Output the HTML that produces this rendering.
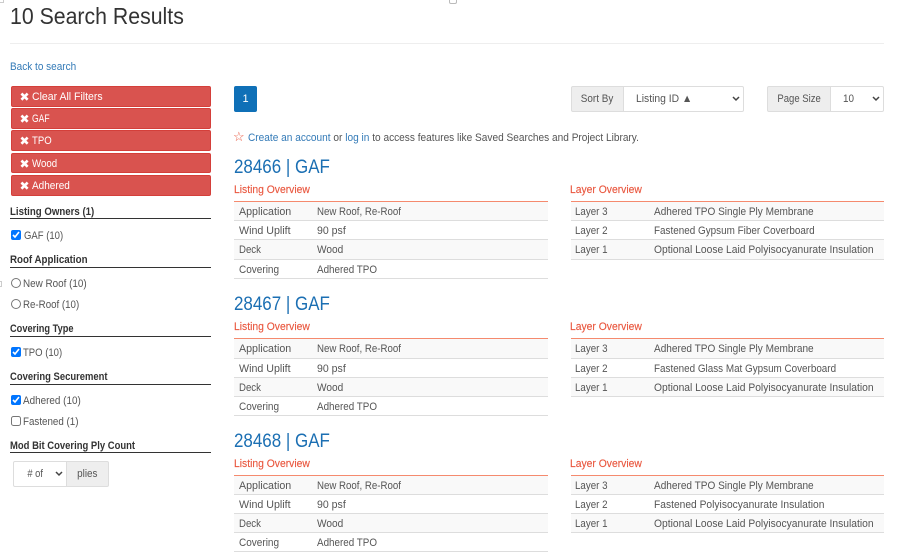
<!DOCTYPE html>
<html><head><meta charset="utf-8"><style>
html,body{margin:0;padding:0;background:#fff}
body{width:901px;height:558px;position:relative;overflow:hidden;font-family:"Liberation Sans",sans-serif;font-size:11px;color:#555}
.t{position:absolute;white-space:nowrap;line-height:14px;transform:scaleX(var(--s,.9));transform-origin:0 50%}
.a{color:#337ab7}
.btn{position:absolute;left:11px;width:200px;height:20.5px;box-sizing:border-box;background:#d9534f;border:.5px solid #d43f3a;border-radius:2px;color:#fff;line-height:20.5px;white-space:nowrap;padding-left:8px}
.btn b{font-size:12px;font-weight:normal;position:absolute;left:7.5px;top:0}
.btn span{position:absolute;left:19.5px;top:0;transform:scaleX(var(--s,.92));transform-origin:0 50%}
.fh{position:absolute;left:10px;width:201px;height:15px;border-bottom:1px solid #333;color:#333;font-weight:bold;line-height:17px;white-space:nowrap}
.fh span,.c{display:inline-block;transform:scaleX(var(--s,.9));transform-origin:0 50%}
.c{transform-origin:50% 50%}
input{position:absolute;margin:0;width:10px;height:10px;accent-color:#0075ff}
.h{position:absolute;left:234px;font-size:19.5px;line-height:22px;color:#1b6fb3;white-space:nowrap;transform:scaleX(.87);transform-origin:0 50%}
.ov{position:absolute;line-height:14px;color:#e9573f;white-space:nowrap;transform:scaleX(.94);transform-origin:0 50%;-webkit-text-stroke:.15px #e9573f}
.tb{position:absolute;border-top:1px solid #f58a6e}
.r{height:18.2px;border-bottom:1px solid #ddd;line-height:18px;position:relative;white-space:nowrap}
.r.o{background:#f9f9f9}
.r span{position:absolute;top:1px;transform:scaleX(var(--s,.9));transform-origin:0 50%}
.g{position:absolute;background:#eee;border:1px solid #ddd;box-sizing:border-box;color:#555;text-align:center;line-height:25px}
.s{position:absolute;background:#fff;border:1px solid #ddd;box-sizing:border-box;color:#555;line-height:25px}
.s svg{position:absolute;right:3px}
</style></head><body>
<div style="position:absolute;left:0;top:0;width:3px;height:2px;border:1px solid #ccc;border-top:0;border-left:0"></div>
<div style="position:absolute;left:0;top:281px;width:1px;height:4px;border:1px solid #ccc;border-left:0"></div>
<div style="position:absolute;left:449px;top:0;width:6px;height:3px;border:1px solid #bbb;border-top:0;border-radius:0 0 2px 2px"></div>
<div class="t" style="left:10px;top:2px;font-size:23px;line-height:28px;color:#333;--s:.925">10 Search Results</div>
<div style="position:absolute;left:10px;top:43px;width:874px;height:1px;background:#eee"></div>
<div class="t a" style="left:10px;top:60px;--s:.91">Back to search</div>

<div class="btn" style="top:86px"><b>✖</b><span style="--s:.955">Clear All Filters</span></div>
<div class="btn" style="top:108px"><b>✖</b><span style="--s:.78">GAF</span></div>
<div class="btn" style="top:130px"><b>✖</b><span style="--s:.87">TPO</span></div>
<div class="btn" style="top:152.5px"><b>✖</b><span style="--s:.88">Wood</span></div>
<div class="btn" style="top:175px"><b>✖</b><span style="--s:.91">Adhered</span></div>

<div class="fh" style="top:203px;line-height:19px"><span style="--s:.878">Listing Owners (1)</span></div>
<input type="checkbox" checked style="left:11px;top:230px"><div class="t" style="left:24px;top:229px;--s:.865">GAF (10)</div>
<div class="fh" style="top:252px"><span style="--s:.885">Roof Application</span></div>
<input type="radio" style="left:10.5px;top:278px"><div class="t" style="left:23px;top:277px;--s:.898">New Roof (10)</div>
<input type="radio" style="left:10.5px;top:299px"><div class="t" style="left:23px;top:298px;--s:.884">Re-Roof (10)</div>
<div class="fh" style="top:321px"><span style="--s:.84">Covering Type</span></div>
<input type="checkbox" checked style="left:11px;top:347px"><div class="t" style="left:23px;top:346px;--s:.865">TPO (10)</div>
<div class="fh" style="top:369px"><span style="--s:.858">Covering Securement</span></div>
<input type="checkbox" checked style="left:11px;top:395px"><div class="t" style="left:23px;top:394px;--s:.9">Adhered (10)</div>
<input type="checkbox" style="left:11px;top:416px"><div class="t" style="left:23px;top:415px;--s:.89">Fastened (1)</div>
<div class="fh" style="top:437px;line-height:19px"><span style="--s:.86">Mod Bit Covering Ply Count</span></div>
<div class="s" style="left:13px;top:461px;width:54px;height:26px;border-radius:2px 0 0 2px;padding-left:12px;line-height:24px"><span class="c" style="--s:.85">#&nbsp;of</span><svg style="top:9px" width="8" height="6"><path d="M1 1l3 3 3-3" fill="none" stroke="#444" stroke-width="1.5"/></svg></div>
<div class="g" style="left:66px;top:461px;width:43px;height:26px;border-radius:0 2px 2px 0;line-height:24px"><span class="c" style="--s:.9">plies</span></div>

<div style="position:absolute;left:234px;top:86px;width:23px;height:26px;background:#0f70b7;border-radius:2px;color:#fff;text-align:center;line-height:26px">1</div>

<div class="g" style="left:571px;top:86px;width:53px;height:26px;border-radius:2px 0 0 2px"><span class="c" style="--s:.9">Sort By</span></div>
<div class="s" style="left:623px;top:86px;width:121px;height:26px;border-radius:0 2px 2px 0;padding-left:12px"><span class="c" style="--s:.94;transform-origin:0 50%">Listing ID ▲</span><svg style="top:9px" width="8" height="6"><path d="M1 1l3 3 3-3" fill="none" stroke="#444" stroke-width="1.5"/></svg></div>
<div class="g" style="left:767px;top:86px;width:64px;height:26px;border-radius:2px 0 0 2px"><span class="c" style="--s:.865">Page Size</span></div>
<div class="s" style="left:830px;top:86px;width:54px;height:26px;border-radius:0 2px 2px 0;padding-left:12px"><span class="c" style="--s:.9;transform-origin:0 50%">10</span><svg style="top:9px" width="8" height="6"><path d="M1 1l3 3 3-3" fill="none" stroke="#444" stroke-width="1.5"/></svg></div>

<div style="position:absolute;left:233px;top:130px;line-height:14px;color:#e9573f;font-size:13px">☆</div>
<div class="t" style="left:248px;top:131px;--s:.919"><span class="a">Create an account</span> or <span class="a">log in</span> to access features like Saved Searches and Project Library.</div>

<!-- block 1 -->
<div class="h" style="top:156px">28466 | GAF</div>
<div class="ov" style="left:234px;top:183px">Listing Overview</div>
<div class="ov" style="left:570px;top:183px">Layer Overview</div>
<div class="tb" style="left:234px;top:201px;width:314px">
<div class="r o"><span style="left:5px;--s:.97">Application</span><span style="left:83px;--s:.88">New Roof, Re-Roof</span></div>
<div class="r"><span style="left:5px;--s:.97">Wind Uplift</span><span style="left:83px;--s:.96">90 psf</span></div>
<div class="r o"><span style="left:5px;--s:.875">Deck</span><span style="left:83px;--s:.92">Wood</span></div>
<div class="r"><span style="left:5px;--s:.91">Covering</span><span style="left:83px;--s:.895">Adhered TPO</span></div>
</div>
<div class="tb" style="left:571px;top:201px;width:313px">
<div class="r o"><span style="left:4px;--s:.886">Layer 3</span><span style="left:82.5px;--s:.914">Adhered TPO Single Ply Membrane</span></div>
<div class="r"><span style="left:4px;--s:.886">Layer 2</span><span style="left:82.5px;--s:.9">Fastened Gypsum Fiber Coverboard</span></div>
<div class="r o"><span style="left:4px;--s:.886">Layer 1</span><span style="left:82.5px;--s:.935">Optional Loose Laid Polyisocyanurate Insulation</span></div>
</div>

<!-- block 2 -->
<div class="h" style="top:293px">28467 | GAF</div>
<div class="ov" style="left:234px;top:320px">Listing Overview</div>
<div class="ov" style="left:570px;top:320px">Layer Overview</div>
<div class="tb" style="left:234px;top:338.4px;width:314px">
<div class="r o"><span style="left:5px;--s:.97">Application</span><span style="left:83px;--s:.88">New Roof, Re-Roof</span></div>
<div class="r"><span style="left:5px;--s:.97">Wind Uplift</span><span style="left:83px;--s:.96">90 psf</span></div>
<div class="r o"><span style="left:5px;--s:.875">Deck</span><span style="left:83px;--s:.92">Wood</span></div>
<div class="r"><span style="left:5px;--s:.91">Covering</span><span style="left:83px;--s:.895">Adhered TPO</span></div>
</div>
<div class="tb" style="left:571px;top:338.4px;width:313px">
<div class="r o"><span style="left:4px;--s:.886">Layer 3</span><span style="left:82.5px;--s:.914">Adhered TPO Single Ply Membrane</span></div>
<div class="r"><span style="left:4px;--s:.886">Layer 2</span><span style="left:82.5px;--s:.897">Fastened Glass Mat Gypsum Coverboard</span></div>
<div class="r o"><span style="left:4px;--s:.886">Layer 1</span><span style="left:82.5px;--s:.935">Optional Loose Laid Polyisocyanurate Insulation</span></div>
</div>

<!-- block 3 -->
<div class="h" style="top:430px">28468 | GAF</div>
<div class="ov" style="left:234px;top:457px">Listing Overview</div>
<div class="ov" style="left:570px;top:457px">Layer Overview</div>
<div class="tb" style="left:234px;top:474.6px;width:314px">
<div class="r o"><span style="left:5px;--s:.97">Application</span><span style="left:83px;--s:.88">New Roof, Re-Roof</span></div>
<div class="r"><span style="left:5px;--s:.97">Wind Uplift</span><span style="left:83px;--s:.96">90 psf</span></div>
<div class="r o"><span style="left:5px;--s:.875">Deck</span><span style="left:83px;--s:.92">Wood</span></div>
<div class="r"><span style="left:5px;--s:.91">Covering</span><span style="left:83px;--s:.895">Adhered TPO</span></div>
</div>
<div class="tb" style="left:571px;top:474.6px;width:313px">
<div class="r o"><span style="left:4px;--s:.886">Layer 3</span><span style="left:82.5px;--s:.914">Adhered TPO Single Ply Membrane</span></div>
<div class="r"><span style="left:4px;--s:.886">Layer 2</span><span style="left:82.5px;--s:.932">Fastened Polyisocyanurate Insulation</span></div>
<div class="r o"><span style="left:4px;--s:.886">Layer 1</span><span style="left:82.5px;--s:.935">Optional Loose Laid Polyisocyanurate Insulation</span></div>
</div>
</body></html>
